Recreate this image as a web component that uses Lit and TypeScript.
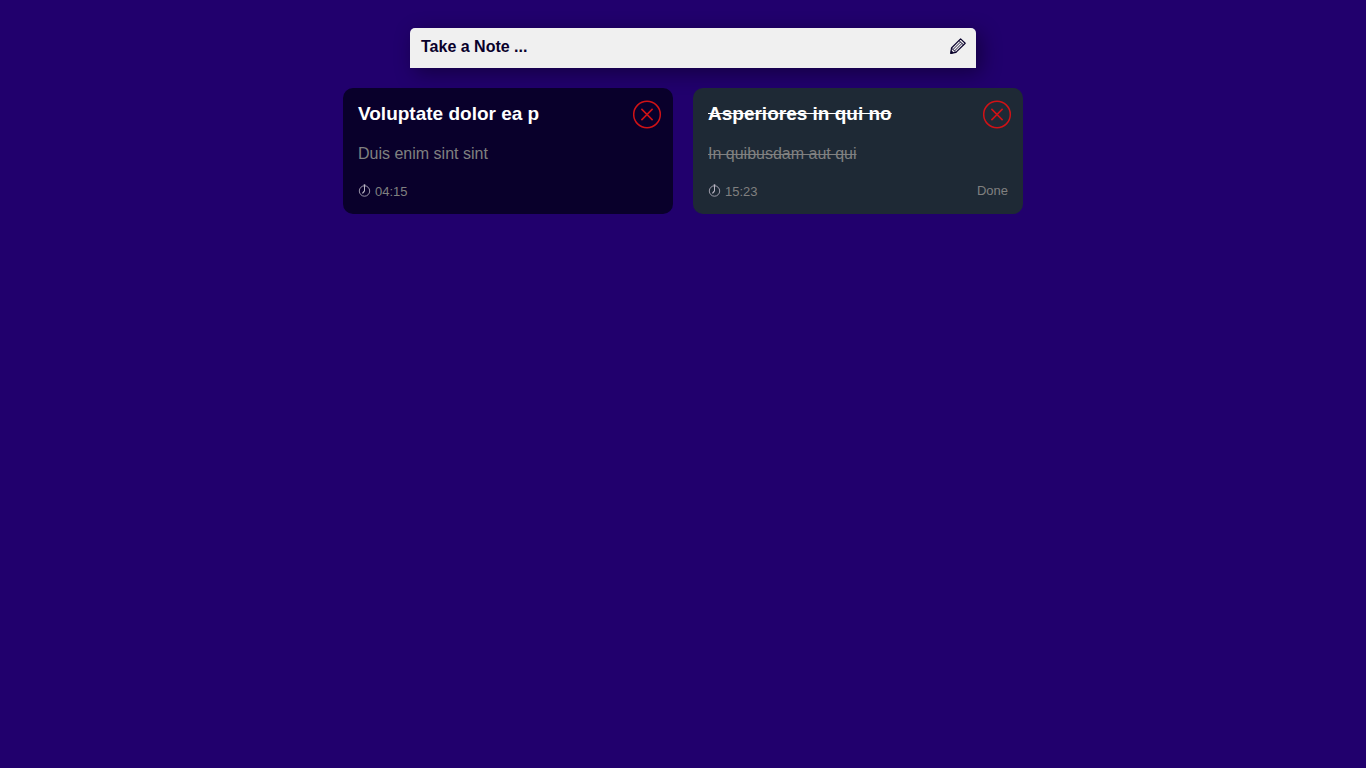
import { LitElement, html, css, nothing } from "lit";
import { customElement, property, state } from "lit/decorators.js";

interface Note {
  id: number;
  title: string;
  body: string;
  time: string;
  done: boolean;
}

@customElement("note-card")
export class NoteCard extends LitElement {
  @property({ attribute: false }) note!: Note;

  static styles = css`
    :host {
      display: block;
    }
    .card {
      display: flex;
      flex-direction: column;
      padding: 12px 11px 12px 15px;
      border-radius: 10px;
      background: #09002b;
      color: #808080;
      font-size: 16px;
      line-height: 20px;
    }
    .card.done {
      background: #1e2935;
    }
    .head {
      display: flex;
      justify-content: space-between;
      align-items: flex-start;
    }
    .title {
      margin: 2px 0 0;
      color: #fff;
      font-size: 19px;
      line-height: 24px;
      font-weight: 700;
    }
    .body {
      margin: 15px 0 18px;
    }
    .done .title,
    .done .body {
      text-decoration: line-through;
    }
    .remove {
      display: block;
      flex: none;
      padding: 0;
      border: 0;
      background: none;
      color: #d01216;
      cursor: pointer;
    }
    .remove svg,
    .time svg {
      display: block;
    }
    .foot {
      display: flex;
      justify-content: space-between;
      align-items: flex-start;
      padding-right: 4px;
      font-size: 13px;
      line-height: 20px;
    }
    .time {
      display: flex;
      align-items: center;
      gap: 4px;
    }
    .time svg {
      color: #bab6c4;
      margin-bottom: 3px;
    }
    .status {
      line-height: 18px;
    }
  `;

  private remove() {
    this.dispatchEvent(new CustomEvent("note-remove", { detail: this.note.id }));
  }

  render() {
    const { title, body, time, done } = this.note;
    return html`
      <article class="card ${done ? "done" : ""}">
        <header class="head">
          <h3 class="title">${title}</h3>
          <button class="remove" type="button" aria-label="Delete ${title}" @click=${this.remove}>
            <svg width="29" height="29" viewBox="0 0 29 29" fill="none" stroke="currentColor" stroke-width="1.5">
              <circle cx="14" cy="14.5" r="13.3" />
              <path d="M8.4 8.9L19.6 20.1M19.6 8.9L8.4 20.1" />
            </svg>
          </button>
        </header>
        <p class="body">${body}</p>
        <footer class="foot">
          <span class="time">
            <svg width="13" height="13" viewBox="0 0 13 13" fill="none" stroke="currentColor" aria-hidden="true">
              <circle cx="6.5" cy="7" r="5.2" stroke-width="0.8" />
              <path d="M6.5 0.5V7" stroke-width="1" />
              <path d="M5.5 1h2" stroke-width="0.8" />
              <path d="M6.5 7L4.4 9.4" stroke-width="1.2" />
            </svg>
            <time>${time}</time>
          </span>
          ${done ? html`<span class="status">Done</span>` : nothing}
        </footer>
      </article>
    `;
  }
}

@customElement("app-root")
export class AppRoot extends LitElement {
  @state() private notes: Note[] = [
    { id: 1, title: "Voluptate dolor ea p", body: "Duis enim sint sint", time: "04:15", done: false },
    { id: 2, title: "Asperiores in qui no", body: "In quibusdam aut qui", time: "15:23", done: true },
  ];

  static styles = css`
    :host {
      display: block;
      box-sizing: border-box;
      min-height: 100vh;
      padding: 28px 20px;
      background: #21006d;
      font-family: "Liberation Sans", Arial, sans-serif;
    }
    .page {
      display: flex;
      flex-direction: column;
      gap: 20px;
      max-width: 680px;
      margin: 0 auto;
    }
    .composer {
      display: flex;
      justify-content: space-between;
      align-items: flex-start;
      margin: 0 47px 0 67px;
      padding: 8px 10px 10px 11px;
      border: 0;
      border-radius: 5px 5px 0 0;
      background: #f0f0f0;
      box-shadow: 5px 5px 20px rgba(0, 0, 0, 0.4);
      color: #09002b;
      font: 700 16px/22px "Liberation Sans", Arial, sans-serif;
      text-align: left;
      cursor: text;
    }
    .composer svg {
      display: block;
      margin-top: 2px;
    }
    .notes {
      display: grid;
      grid-template-columns: repeat(auto-fill, minmax(300px, 1fr));
      gap: 20px;
      margin: 0;
      padding: 0;
      list-style: none;
    }
  `;

  private drop(e: CustomEvent<number>) {
    this.notes = this.notes.filter((n) => n.id !== e.detail);
  }

  render() {
    return html`
      <main class="page">
        <button class="composer" type="button">
          <span>Take a Note ...</span>
          <svg width="16" height="16" viewBox="0 0 16 16" fill="none" stroke="currentColor" aria-hidden="true">
            <path d="M10.6 0.9L15.2 5.2L5.9 14.4L0.8 15.3L1.5 10Z" stroke-width="1.2" stroke-linejoin="round" />
            <path d="M9 2.6L13.5 6.9M1.5 10L5.9 14.4" stroke-width="1" />
            <path d="M10.4 4.1L3 11.5M11.9 5.5L4.5 13" stroke-width="0.9" />
            <path d="M0.8 15.3L1.2 12.6L3.4 14.8Z" fill="currentColor" stroke-width="0.8" />
          </svg>
        </button>
        <ul class="notes">
          ${this.notes.map(
            (note) => html`<li><note-card .note=${note} @note-remove=${this.drop}></note-card></li>`
          )}
        </ul>
      </main>
    `;
  }
}
